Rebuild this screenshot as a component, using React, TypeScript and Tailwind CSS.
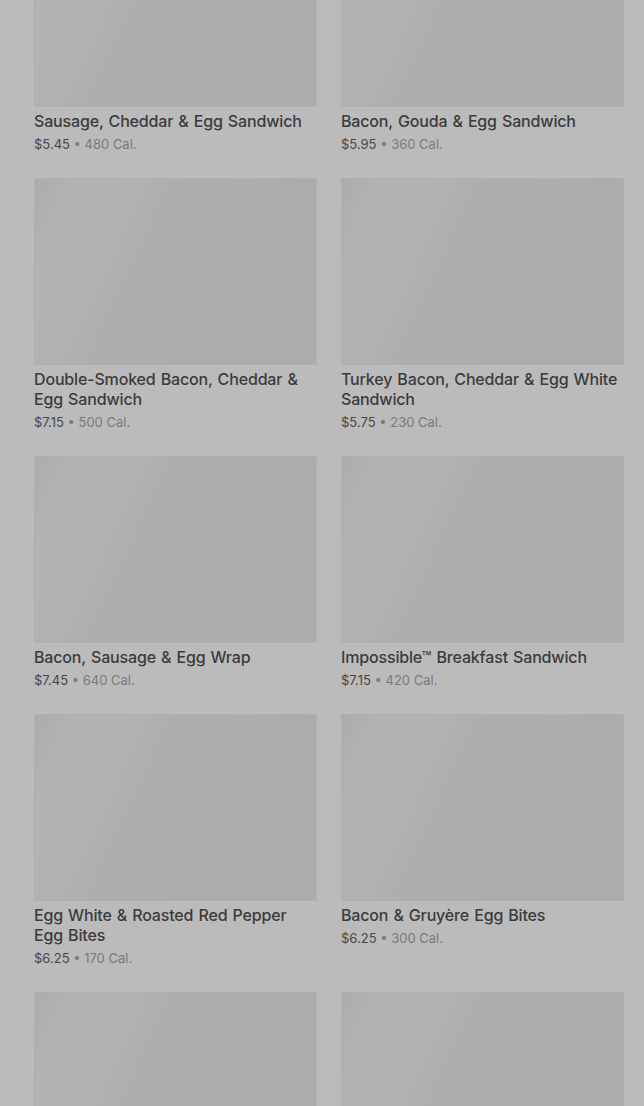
import React from "react";

interface Item {
  name: string;
  price: string;
  cal: string;
}

const items: Item[] = [
  { name: "Sausage, Cheddar & Egg Sandwich", price: "$5.45", cal: "480 Cal." },
  { name: "Bacon, Gouda & Egg Sandwich", price: "$5.95", cal: "360 Cal." },
  { name: "Double-Smoked Bacon, Cheddar & Egg Sandwich", price: "$7.15", cal: "500 Cal." },
  { name: "Turkey Bacon, Cheddar & Egg White Sandwich", price: "$5.75", cal: "230 Cal." },
  { name: "Bacon, Sausage & Egg Wrap", price: "$7.45", cal: "640 Cal." },
  { name: "Impossible™ Breakfast Sandwich", price: "$7.15", cal: "420 Cal." },
  { name: "Egg White & Roasted Red Pepper Egg Bites", price: "$6.25", cal: "170 Cal." },
  { name: "Bacon & Gruyère Egg Bites", price: "$6.25", cal: "300 Cal." },
  { name: "", price: "", cal: "" },
  { name: "", price: "", cal: "" },
];

function MenuCard({ item }: { item: Item }) {
  return (
    <div className="flex flex-col">
      {/* Image placeholder */}
      <div className="h-[187px] w-full border border-[#b0b0b0] bg-[linear-gradient(115deg,#acacac_0%,#b3b3b3_12%,#b2b2b2_28%,#adadad_40%,#acacac_100%)]" />
      {item.name && (
        <div className="pt-1 pb-[26px]">
          <h3 className="text-base leading-5 font-medium text-[#3b3b3b] tracking-[-0.01em] [word-spacing:1px]">{item.name}</h3>
          <p className="mt-[5px] text-[13px] leading-4 text-[#7a7a7a]">
            <span className="text-[#474747]">{item.price}</span> • {item.cal}
          </p>
        </div>
      )}
    </div>
  );
}

export default function App() {
  return (
    <div className="h-[1106px] overflow-hidden bg-[#bbbbbb] font-['Inter',sans-serif]">
      <div className="-mt-[80px] grid grid-cols-2 gap-x-6 pl-[34px] pr-5">
        {items.map((item, i) => (
          <MenuCard key={i} item={item} />
        ))}
      </div>
    </div>
  );
}
